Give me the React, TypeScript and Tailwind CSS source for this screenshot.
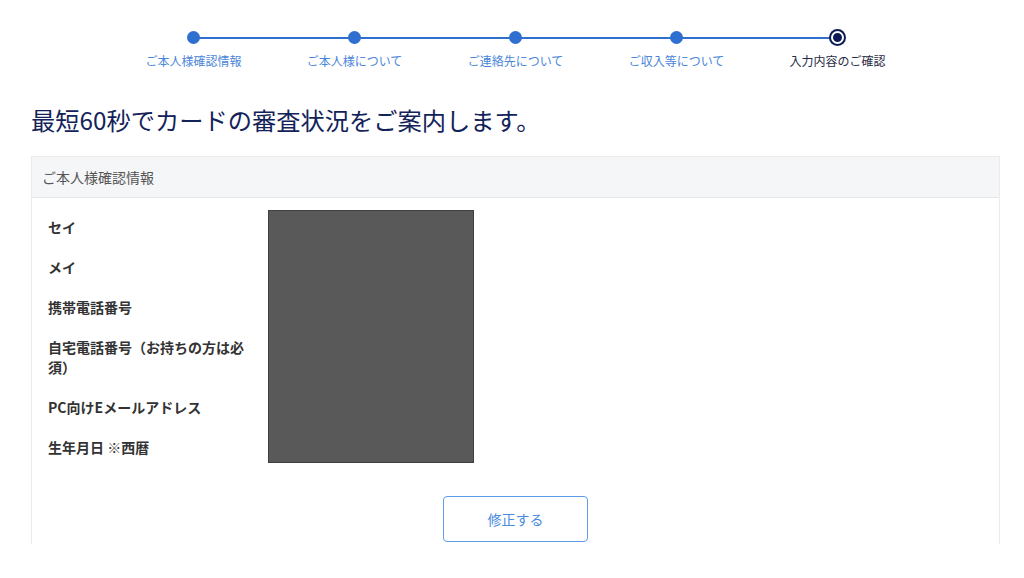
import React from "react"

const steps = [
  "ご本人様確認情報",
  "ご本人様について",
  "ご連絡先について",
  "ご収入等について",
  "入力内容のご確認",
]

const rows = [
  "セイ",
  "メイ",
  "携帯電話番号",
  "自宅電話番号（お持ちの方は必須）",
  "PC向けEメールアドレス",
  "生年月日 ※西暦",
]

function Stepper() {
  return (
    <div className="relative mx-auto w-[805px] pt-[31px]">
      {/* connecting line */}
      <div className="absolute left-[80.5px] right-[80.5px] top-[36.5px] h-[2px] bg-[#2f6fd0]" />
      <div className="relative grid grid-cols-5">
        {steps.map((label, i) => {
          const current = i === steps.length - 1
          return (
            <div key={label} className="flex flex-col items-center">
              <div className="flex h-[13px] items-center justify-center">
                {current ? (
                  <div className="flex h-[17px] w-[17px] items-center justify-center rounded-full bg-[#0c1a55]">
                    <div className="h-[13px] w-[13px] rounded-full border-2 border-white bg-[#0c1a55]" />
                  </div>
                ) : (
                  <div className="h-[13px] w-[13px] rounded-full bg-[#2f6fd0]" />
                )}
              </div>
              <p
                className={
                  current
                    ? "mt-[9px] text-[12px] leading-[16px] text-[#1f2a44]"
                    : "mt-[9px] text-[12px] leading-[16px] text-[#4a86d8]"
                }
              >
                {label}
              </p>
            </div>
          )
        })}
      </div>
    </div>
  )
}

export default function App() {
  return (
    <div
      className="min-h-[578px] bg-white"
      style={{ fontFamily: '"Noto Sans CJK JP", "Noto Sans", sans-serif' }}
    >
      <div className="ml-[31px] w-[969px]">
        <Stepper />

        <h1 className="mt-[35px] text-[24.25px] leading-[32px] font-normal text-[#13235a]">
          最短60秒でカードの審査状況をご案内します。
        </h1>

        {/* Confirmation card */}
        <div className="mt-[20px] border-x border-t border-[#ebebeb]">
          <div className="flex h-[41px] items-center border-b border-[#e6e6e6] bg-[#f5f6f8] px-[10px]">
            <span className="text-[14px] text-[#555]">ご本人様確認情報</span>
          </div>

          <div className="px-[16px] pt-[12px] pb-[2px]">
            <div className="flex items-start gap-[20px]">
              <dl className="flex w-[200px] flex-col gap-[20px] pt-[7px]">
                {rows.map((r) => (
                  <dt key={r} className="text-[14px] leading-[20px] font-bold text-[#333]">
                    {r}
                  </dt>
                ))}
              </dl>
              <div className="h-[253px] w-[206px] border border-[#3f3f3f] bg-[#595959]" />
            </div>

            <div className="mt-[33px] flex justify-center">
              <button className="h-[46px] w-[145px] rounded-[4px] border border-[#5e9de8] bg-white text-[14px] text-[#4a8be0]">
                修正する
              </button>
            </div>
          </div>
        </div>
      </div>
    </div>
  )
}
